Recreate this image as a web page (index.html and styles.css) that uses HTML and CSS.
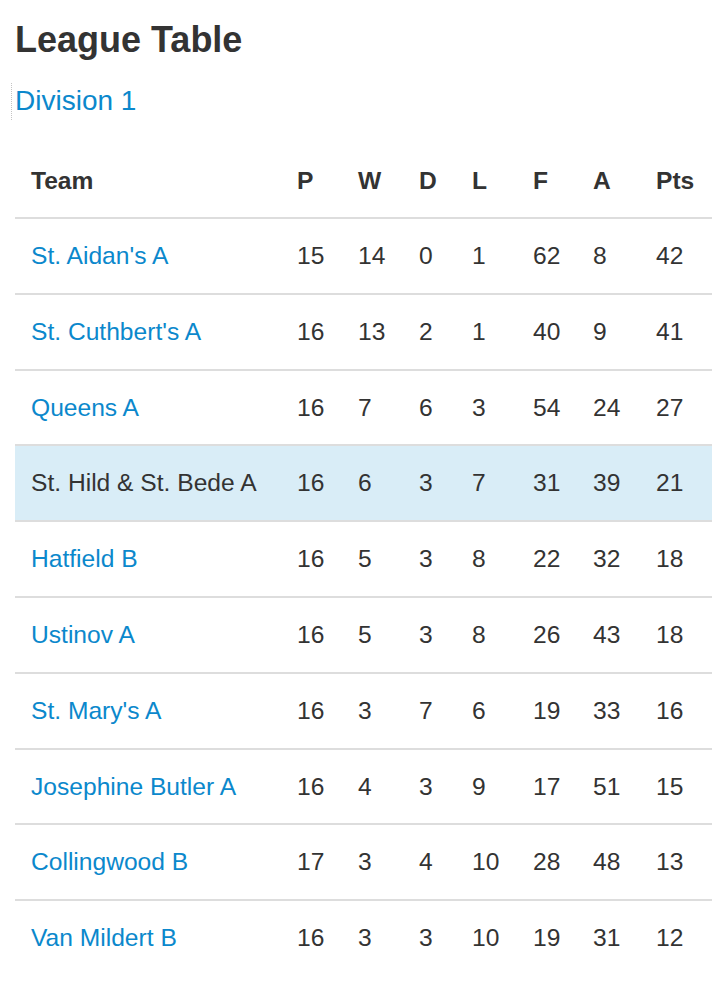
FILE: index.html
```html
<!DOCTYPE html>
<html lang="en">
<head>
<meta charset="utf-8">
<title>League Table</title>
<link rel="stylesheet" href="styles.css">
</head>
<body>
<div class="page">
  <h1 class="title">League Table</h1>
  <div class="division"><a class="division-link" href="#">Division 1</a></div>
  <table class="league">
    <colgroup>
      <col class="c-team"><col class="c-p"><col class="c-w"><col class="c-d"><col class="c-l"><col class="c-f"><col class="c-a"><col class="c-pts">
    </colgroup>
    <thead>
      <tr><th>Team</th><th>P</th><th>W</th><th>D</th><th>L</th><th>F</th><th>A</th><th>Pts</th></tr>
    </thead>
    <tbody>
      <tr><td><a href="#">St. Aidan's A</a></td><td>15</td><td>14</td><td>0</td><td>1</td><td>62</td><td>8</td><td>42</td></tr>
      <tr><td><a href="#">St. Cuthbert's A</a></td><td>16</td><td>13</td><td>2</td><td>1</td><td>40</td><td>9</td><td>41</td></tr>
      <tr><td><a href="#">Queens A</a></td><td>16</td><td>7</td><td>6</td><td>3</td><td>54</td><td>24</td><td>27</td></tr>
      <tr class="current"><td>St. Hild &amp; St. Bede A</td><td>16</td><td>6</td><td>3</td><td>7</td><td>31</td><td>39</td><td>21</td></tr>
      <tr><td><a href="#">Hatfield B</a></td><td>16</td><td>5</td><td>3</td><td>8</td><td>22</td><td>32</td><td>18</td></tr>
      <tr><td><a href="#">Ustinov A</a></td><td>16</td><td>5</td><td>3</td><td>8</td><td>26</td><td>43</td><td>18</td></tr>
      <tr><td><a href="#">St. Mary's A</a></td><td>16</td><td>3</td><td>7</td><td>6</td><td>19</td><td>33</td><td>16</td></tr>
      <tr><td><a href="#">Josephine Butler A</a></td><td>16</td><td>4</td><td>3</td><td>9</td><td>17</td><td>51</td><td>15</td></tr>
      <tr><td><a href="#">Collingwood B</a></td><td>17</td><td>3</td><td>4</td><td>10</td><td>28</td><td>48</td><td>13</td></tr>
      <tr><td><a href="#">Van Mildert B</a></td><td>16</td><td>3</td><td>3</td><td>10</td><td>19</td><td>31</td><td>12</td></tr>
    </tbody>
  </table>
</div>
</body>
</html>
```
FILE: styles.css
```css
html, body {
  margin: 0;
  padding: 0;
  background: #fff;
}
body {
  font-family: "Liberation Sans", Arial, Helvetica, sans-serif;
  color: #333;
  font-size: 24px;
}
.page {
  padding: 0 8px 0 15px;
}
.title {
  margin: 20px 0 0;
  font-size: 36px;
  line-height: 40px;
  font-weight: bold;
  color: #333;
}
.division {
  margin-top: 23px;
  margin-left: -4px;
  padding-left: 3px;
  border-left: 1px dotted #c4c4c4;
  line-height: 36px;
  width: max-content;
}
.division-link {
  font-size: 28px;
  color: #0b88cc;
  text-decoration: none;
}
.league {
  margin-top: 24px;
  width: 697px;
  border-collapse: collapse;
  table-layout: fixed;
}
.c-team { width: 266px; }
.c-p { width: 61px; }
.c-w { width: 61px; }
.c-d { width: 53px; }
.c-l { width: 61px; }
.c-f { width: 60px; }
.c-a { width: 63px; }
.c-pts { width: 72px; }
.league th,
.league td {
  text-align: left;
  padding: 20px 16px;
  line-height: 33.8px;
  font-size: 24.6px;
  white-space: nowrap;
}
.league th {
  font-weight: bold;
  border-bottom: 2px solid #ddd;
  line-height: 33px;
}
.league td {
  border-top: 2px solid #ddd;
}
.league tbody tr:first-child td {
  border-top: 0;
}
.league a {
  color: #0b88cc;
  text-decoration: none;
}
.league tr.current td {
  background: #d9edf7;
}
```
